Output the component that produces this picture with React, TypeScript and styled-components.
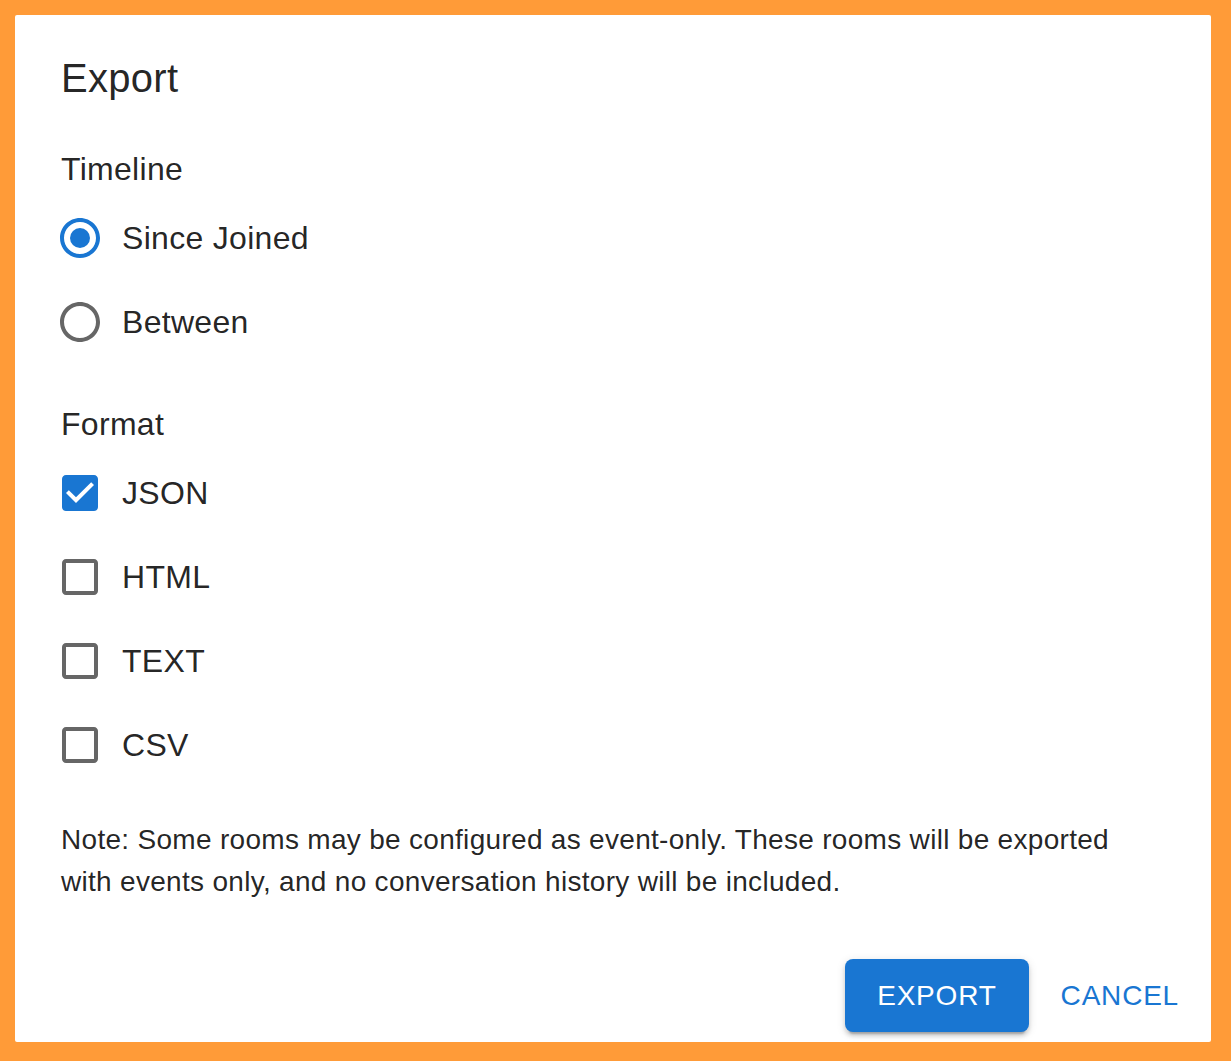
import React, { useState } from 'react';
import styled, { createGlobalStyle } from 'styled-components';

const GlobalStyle = createGlobalStyle`
  html, body, #root {
    height: 100%;
  }
  body {
    margin: 0;
    background: #ff9b38;
    font-family: "Liberation Sans", Arial, sans-serif;
  }
  * {
    box-sizing: border-box;
  }
`;

const Page = styled.div`
  height: 100%;
  padding: 15px 20px 19px 15px;
`;

const Dialog = styled.div`
  height: 100%;
  background: #fff;
  border-radius: 2px;
  display: flex;
  flex-direction: column;
  color: rgba(0, 0, 0, 0.87);
`;

const Title = styled.h2`
  margin: 0;
  padding: 31px 48px 0 46px;
  font-size: 40px;
  font-weight: 400;
  line-height: 64px;
  letter-spacing: 0.3px;
`;

const Content = styled.div`
  padding: 35px 48px 40px 46px;
  display: flex;
  flex-direction: column;
`;

const GroupLabel = styled.div`
  font-size: 32px;
  line-height: 48px;
  letter-spacing: 0.3px;
  margin-bottom: 3px;
`;

const Group = styled.div<{ $gap?: number }>`
  display: flex;
  flex-direction: column;
  margin-bottom: ${(p) => p.$gap ?? 0}px;
`;

const Option = styled.label`
  display: flex;
  align-items: center;
  height: 84px;
  margin-left: -5px;
  cursor: pointer;
  font-size: 32px;
  letter-spacing: 0.3px;
  user-select: none;
`;

const IconBox = styled.span<{ $on: boolean }>`
  width: 48px;
  height: 48px;
  display: flex;
  margin-right: 18px;
  color: ${(p) => (p.$on ? '#1976d2' : 'rgba(0, 0, 0, 0.6)')};

  svg {
    width: 48px;
    height: 48px;
    fill: currentColor;
  }
`;

const Note = styled.p`
  margin: 32px 0 0;
  font-size: 28px;
  line-height: 42px;
  letter-spacing: 0.3px;
`;

const Actions = styled.div`
  margin-top: auto;
  display: flex;
  justify-content: flex-end;
  align-items: center;
  gap: 16px;
  padding: 16px 16px 12px;
`;

const Button = styled.button<{ $contained?: boolean }>`
  font-family: "Liberation Sans", Arial, sans-serif;
  font-size: 28px;
  line-height: 49px;
  letter-spacing: 0.8px;
  text-transform: uppercase;
  border: none;
  border-radius: 8px;
  cursor: pointer;
  padding: ${(p) => (p.$contained ? '12px 32px' : '12px 16px')};
  background: ${(p) => (p.$contained ? '#1976d2' : 'transparent')};
  color: ${(p) => (p.$contained ? '#fff' : '#1976d2')};
  box-shadow: ${(p) =>
    p.$contained
      ? '0px 6px 2px -4px rgba(0,0,0,0.2), 0px 4px 4px 0px rgba(0,0,0,0.14), 0px 2px 10px 0px rgba(0,0,0,0.12)'
      : 'none'};
`;

function RadioIcon({ checked }: { checked: boolean }) {
  return (
    <svg viewBox="0 0 24 24">
      <path d="M12 2C6.48 2 2 6.48 2 12s4.48 10 10 10 10-4.48 10-10S17.52 2 12 2zm0 18c-4.42 0-8-3.58-8-8s3.58-8 8-8 8 3.58 8 8-3.58 8-8 8z" />
      {checked && <circle cx="12" cy="12" r="5" />}
    </svg>
  );
}

function CheckIcon({ checked }: { checked: boolean }) {
  return checked ? (
    <svg viewBox="0 0 24 24">
      <path d="M19 3H5c-1.11 0-2 .9-2 2v14c0 1.1.89 2 2 2h14c1.11 0 2-.9 2-2V5c0-1.1-.89-2-2-2zm-9 14l-5-5 1.41-1.41L10 14.17l7.59-7.59L19 8l-9 9z" />
    </svg>
  ) : (
    <svg viewBox="0 0 24 24">
      <path d="M19 5v14H5V5h14m0-2H5c-1.1 0-2 .9-2 2v14c0 1.1.9 2 2 2h14c1.1 0 2-.9 2-2V5c0-1.1-.9-2-2-2z" />
    </svg>
  );
}

const timelines = ['Since Joined', 'Between'];
const formats = ['JSON', 'HTML', 'TEXT', 'CSV'];

export default function App() {
  const [timeline, setTimeline] = useState('Since Joined');
  const [selected, setSelected] = useState<string[]>(['JSON']);

  const toggle = (f: string) =>
    setSelected((s) => (s.includes(f) ? s.filter((x) => x !== f) : [...s, f]));

  return (
    <>
      <GlobalStyle />
      <Page>
        <Dialog>
          <Title>Export</Title>
          <Content>
            <GroupLabel>Timeline</GroupLabel>
            <Group $gap={36}>
              {timelines.map((t) => (
                <Option key={t} onClick={() => setTimeline(t)}>
                  <IconBox $on={timeline === t}>
                    <RadioIcon checked={timeline === t} />
                  </IconBox>
                  {t}
                </Option>
              ))}
            </Group>
            <GroupLabel>Format</GroupLabel>
            <Group>
              {formats.map((f) => (
                <Option key={f} onClick={() => toggle(f)}>
                  <IconBox $on={selected.includes(f)}>
                    <CheckIcon checked={selected.includes(f)} />
                  </IconBox>
                  {f}
                </Option>
              ))}
            </Group>
            <Note>
              Note: Some rooms may be configured as event-only. These rooms will be exported with events
              only, and no conversation history will be included.
            </Note>
          </Content>
          <Actions>
            <Button $contained>Export</Button>
            <Button>Cancel</Button>
          </Actions>
        </Dialog>
      </Page>
    </>
  );
}
